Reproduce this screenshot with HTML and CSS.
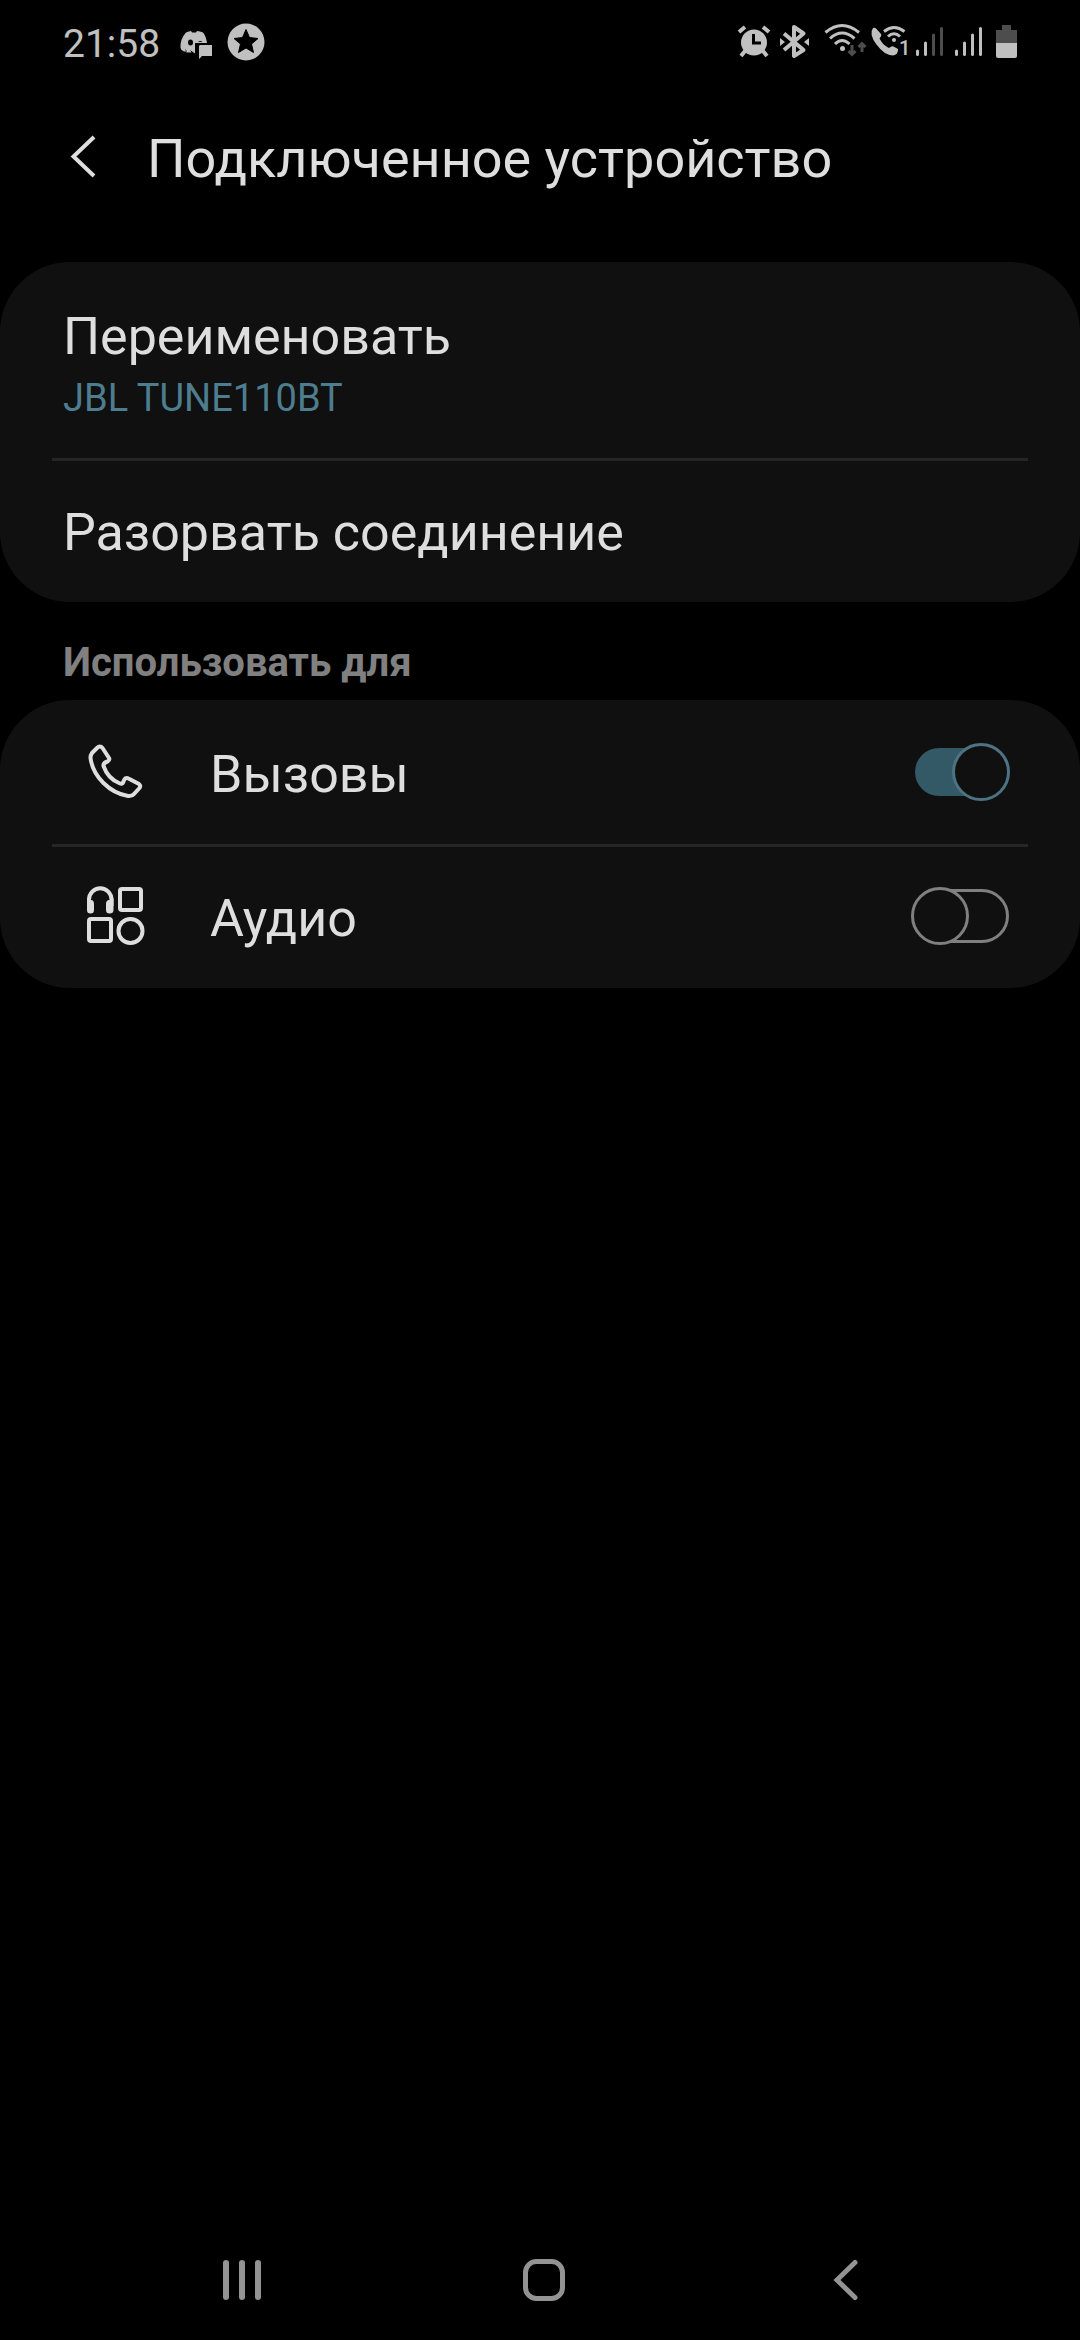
FILE: index.html
```html
<!DOCTYPE html>
<html lang="ru">
<head>
<meta charset="utf-8">
<meta name="viewport" content="width=device-width">
<title>Подключенное устройство</title>
<link rel="stylesheet" href="styles.css">
</head>
<body>
<div class="status">
  <time class="clock">21:58</time>
  <svg class="notice-chat" viewBox="0 0 40 48" aria-hidden="true">
    <path fill="currentColor" fill-rule="evenodd" d="M10 12.500Q13 11 15 11L16 12.500H20L21 11Q24 11 27 12.500Q30 16 31 23H19V33.500L14 30L15.500 32.500H10.500L9 28.500L11 31.500L8 31.500Q5 30.500 4.500 28Q4 19 10 12.500ZM14.500 19.500A2.500 3 0 1 0 14.500 25.500A2.500 3 0 1 0 14.500 19.500ZM22 22A3 3 0 0 1 26.500 22Z"/>
    <path fill="currentColor" stroke="#000" stroke-width="2" paint-order="stroke" d="M24 25H36V36H26L23 39V26Z"/>
  </svg>
  <svg class="notice-star" viewBox="0 0 40 48" aria-hidden="true">
    <circle cx="20" cy="22" r="18.500" fill="currentColor"/>
    <path fill="#000" stroke="#000" stroke-linejoin="round" d="M20 9.500L23.500 17.500L32 18.500L25.500 24L27.500 32.500L20 28L12.500 32.500L14.500 24L8 18.500L16.500 17.500Z"/>
  </svg>
  <div class="indicators">
    <svg width="40" viewBox="0 0 40 48" aria-hidden="true">
      <circle cx="18" cy="22.500" r="13" fill="currentColor"/>
      <path d="M3 12L9 7M27 7L33 12M9 31L5 36M27 31L31 36" stroke="currentColor" stroke-width="4"/>
      <path d="M17.500 14V23H25" stroke="#000" stroke-width="3" fill="none"/>
    </svg>
    <svg width="44" viewBox="0 0 44 48" aria-hidden="true">
      <path d="M8 13.500L27.500 30L18 36V7L27.500 13.500L8 30" stroke="currentColor" stroke-width="4" stroke-linejoin="round" fill="none"/>
      <path d="M4 18L9 22L4 26ZM33 18L28 22L33 26Z" fill="currentColor"/>
    </svg>
    <svg width="48" viewBox="0 0 48 48" aria-hidden="true">
      <g fill="none" stroke="currentColor" stroke-width="3"><path d="M5.500 12.500Q22 -1.500 39 12.500M10 18.500Q22 7.500 34.500 18.500M15 24Q22 17 29.500 24"/></g>
      <circle cx="22.500" cy="28.500" r="2.500" fill="currentColor"/>
      <path class="dim" d="M32 25V34M28.500 31L32 34.500L35.500 31M42 32V23M38.500 27L42 23.500L45.500 27" fill="none" stroke-width="3"/>
    </svg>
    <svg width="44" viewBox="0 0 44 48" aria-hidden="true">
      <path fill="currentColor" d="M5 8Q7 7 8.500 9L13 14Q14 15.500 11.500 18.500C14 23 16 25.500 21 28Q24 25.500 25.500 26.500L30 29Q30.500 34.500 25 35.500Q16 35 8.500 24.500Q.500 14 5 8Z"/>
      <path d="M16 11.500Q26 3.500 36.500 11.500M20 16.500Q26 11 32 16.500" fill="none" stroke="currentColor" stroke-width="3"/>
      <circle cx="26" cy="20" r="2" fill="currentColor"/>
      <text x="31" y="35" class="sim">1</text>
    </svg>
    <svg width="39" viewBox="0 0 39 48" aria-hidden="true">
      <g fill="none" stroke-width="3" stroke-linecap="round"><path stroke="currentColor" d="M5.500 31V34.500M13.500 23V34.500"/><path class="dim" d="M21.500 15V34.500M29.500 8.500V34.500"/></g>
    </svg>
    <svg width="39" viewBox="0 0 39 48" aria-hidden="true">
      <path stroke="currentColor" stroke-width="3" stroke-linecap="round" d="M5.500 31V34.500M13.500 23V34.500M21.500 15V34.500M29.500 8.500V34.500"/>
    </svg>
    <svg width="30" viewBox="0 0 30 48" aria-hidden="true">
      <path fill="#4d4d4d" d="M12 5H21V10H27V24H6V10H12Z"/>
      <path fill="currentColor" d="M6 23H27V36Q27 38 25 38H8Q6 38 6 36Z"/>
    </svg>
  </div>
</div>

<header class="header">
  <button class="back" type="button" aria-label="Назад">
    <svg viewBox="0 0 40 64" aria-hidden="true"><path d="M30 10L9.500 29.500L30 49" fill="none" stroke="currentColor" stroke-width="4"/></svg>
  </button>
  <h1 class="title">Подключенное устройство</h1>
</header>

<main class="content">
  <section class="card">
    <button class="row row-tall" type="button">
      <span class="label">Переименовать</span>
      <span class="device">JBL TUNE110BT</span>
    </button>
    <button class="row" type="button"><span class="label">Разорвать соединение</span></button>
  </section>
  <h2 class="section-title">Использовать для</h2>
  <section class="card">
    <label class="row row-option">
      <svg class="icon" viewBox="0 0 64 64" aria-hidden="true">
        <path d="M13 8Q16 5 18.500 8L25 18Q26 20 23.500 21.500Q19 23 19.500 26Q24 39 36 43.500Q38.500 44.500 39.500 41.500Q41 36.500 44.500 38.500L55 44Q57 45.500 55.500 48L50 54Q48 56.500 44 56C26 53 9 37 6.500 18Q6.500 15 8 13Z" fill="none" stroke="currentColor" stroke-width="4" stroke-linejoin="round"/>
      </svg>
      <span class="label">Вызовы</span>
      <input class="switch" type="checkbox" role="switch" checked>
    </label>
    <label class="row row-option">
      <svg class="icon" viewBox="0 0 64 64" aria-hidden="true">
        <g fill="none" stroke="currentColor" stroke-width="4">
          <rect x="36" y="5" width="21" height="21" rx="2"/>
          <rect x="5" y="35" width="22" height="22" rx="2"/>
          <circle cx="46.500" cy="47" r="12"/>
          <path d="M5 22V15.500A11 11 0 0 1 27.500 15.500V22"/>
        </g>
        <path fill="currentColor" d="M3 14L7 16Q10 16 10 20V26Q10 29.500 6.500 29.500Q3 29.500 3 26ZM29.500 14L25.500 16Q22 16 22 20V26Q22 29.500 25.500 29.500Q29.500 29.500 29.500 26Z"/>
      </svg>
      <span class="label">Аудио</span>
      <input class="switch" type="checkbox" role="switch">
    </label>
  </section>
</main>

<nav class="navbar">
  <button type="button" aria-label="Недавние"><svg viewBox="0 0 48 48" aria-hidden="true"><path d="M8 7V41M24 7V41M40 7V41" stroke="currentColor" stroke-width="6" stroke-linecap="round"/></svg></button>
  <button type="button" aria-label="Главный экран"><svg viewBox="0 0 48 48" aria-hidden="true"><rect x="5.500" y="5.500" width="37" height="37" rx="11" fill="none" stroke="currentColor" stroke-width="5"/></svg></button>
  <button type="button" aria-label="Назад"><svg viewBox="0 0 48 48" aria-hidden="true"><path d="M33 6.500L15 24L33 41.500" fill="none" stroke="currentColor" stroke-width="5" stroke-linecap="round"/></svg></button>
</nav>
</body>
</html>
```
FILE: styles.css
```css
*,
*::before,
*::after {
  box-sizing: border-box;
}

body {
  margin: 0;
  min-height: 100vh;
  display: flex;
  flex-direction: column;
  background: #000;
  color: #dedede;
  font-family: Roboto, "Noto Sans", sans-serif;
}

button {
  padding: 0;
  border: 0;
  background: none;
  color: inherit;
  font: inherit;
  text-align: left;
}

svg {
  display: block;
}

/* Status bar */
.status {
  display: flex;
  align-items: center;
  padding: 0 60px 0 63px;
  color: #c0c0c0;
}

.status svg {
  height: 48px;
}

.clock {
  font-size: 39px;
  line-height: 88px;
}

.notice-chat {
  width: 40px;
  margin-left: 16px;
}

.notice-star {
  width: 40px;
  margin-left: 10px;
}

.indicators {
  display: flex;
  margin-left: auto;
}

.dim {
  stroke: #4d4d4d;
}

.sim {
  fill: currentColor;
  font-size: 20px;
  font-weight: 500;
}

/* Header */
.header {
  display: flex;
  padding: 39px 64px 71px;
}

.back {
  width: 40px;
  height: 64px;
}

.title {
  margin: 0 0 0 43px;
  font-size: 54px;
  font-weight: 400;
  line-height: 64px;
}

/* Settings list */
.content {
  flex: 1;
}

.card {
  border-radius: 70px;
  background: #101010;
}

.row {
  position: relative;
  display: flex;
  align-items: center;
  width: 100%;
  min-height: 144px;
  padding: 0 63px;
}

.row + .row::before {
  content: "";
  position: absolute;
  top: 0;
  left: 52px;
  right: 52px;
  height: 3px;
  background: #262626;
}

.label {
  padding-top: 6px;
  font-size: 52px;
  line-height: 64px;
}

.row-tall {
  flex-direction: column;
  align-items: flex-start;
  padding-top: 37px;
  padding-bottom: 31px;
}

.device {
  color: #4d7d8f;
  font-size: 38px;
  line-height: 58px;
}

.section-title {
  margin: 0;
  padding: 35px 63px 11px;
  color: #808080;
  font-size: 40px;
  font-weight: 700;
  line-height: 52px;
}

.row-option {
  gap: 62px;
  padding: 0 70px 0 84px;
}

.icon {
  width: 64px;
  height: 64px;
}

/* Switch */
.switch {
  appearance: none;
  position: relative;
  width: 99px;
  height: 58px;
  margin: 0 0 0 auto;
}

.switch::before,
.switch::after {
  content: "";
  position: absolute;
  border: 3px solid #808080;
}

.switch::before {
  inset: 2px 1px 2px 4px;
  border-radius: 27px;
}

.switch::after {
  top: 0;
  left: 0;
  width: 58px;
  height: 58px;
  border-radius: 50%;
  background: #101010;
}

.switch:checked::before {
  inset: 5px 4px;
  border: 0;
  background: #335866;
}

.switch:checked::after {
  left: auto;
  right: 0;
  border-color: #4d7382;
}

/* Navigation bar */
.navbar {
  display: flex;
  padding: 0 83px 0 91px;
  color: #939393;
}

.navbar button {
  flex: 1;
  height: 120px;
}

.navbar svg {
  width: 48px;
  height: 48px;
  margin: 0 auto;
}
```
